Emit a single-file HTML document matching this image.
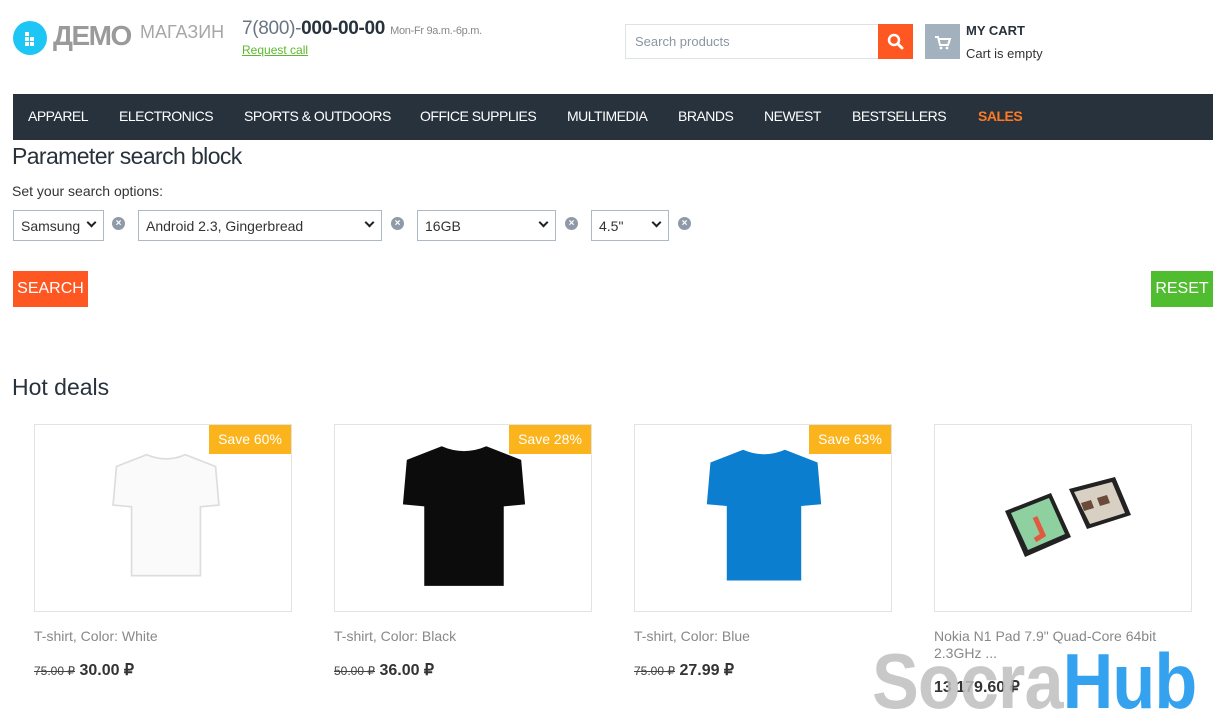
<!DOCTYPE html>
<html><head><meta charset="utf-8"><style>
*{margin:0;padding:0;box-sizing:border-box}
body{width:1220px;height:724px;background:#fff;font-family:"Liberation Sans",sans-serif;position:relative;overflow:hidden;color:#333}
.a{position:absolute}
.nav{left:13px;top:94px;width:1200px;height:46px;background:#27323d}
.nav span{position:absolute;top:14px;color:#fff;font-size:14px;letter-spacing:-0.5px}
.sel{position:absolute;top:210px;height:31px;border:1px solid #aeb9c4;font-size:14px;padding:7px 7px;color:#333}
.sel i{position:absolute;right:8px;top:8px;width:7px;height:7px;border-right:2px solid #222;border-bottom:2px solid #222;transform:rotate(45deg)}
.x{position:absolute;top:217px;width:13px;height:13px;border-radius:50%;background:#8e9aa7;color:#fff;font-size:10px;line-height:13px;text-align:center;font-weight:bold}
.card{position:absolute;top:424px;width:258px;height:188px;border:1px solid #e3e3e3}
.badge{position:absolute;right:0;top:0;width:82px;height:29px;background:#fbb41c;color:#fff;font-size:14px;line-height:29px;text-align:center}
.name{position:absolute;top:628px;font-size:14px;color:#888;line-height:17px}
.pr{position:absolute;top:660px;font-size:16px;font-weight:bold;color:#333}
.pr s{font-size:12px;font-weight:normal;color:#444}
</style></head><body>
<div class="a" style="left:13px;top:21px;width:34px;height:34px;border-radius:50%;background:#1ec6f5">
<div class="a" style="left:12px;top:11px;width:4px;height:4px;background:#fff"></div>
<div class="a" style="left:17px;top:16px;width:4px;height:4px;background:#fff"></div>
<div class="a" style="left:12px;top:16px;width:4px;height:4px;background:#fff"></div>
<div class="a" style="left:12px;top:21px;width:4px;height:4px;background:#fff"></div>
<div class="a" style="left:17px;top:21px;width:4px;height:4px;background:#fff"></div>
</div>
<div class="a" style="left:53px;top:20px;font-size:28px;font-weight:bold;color:#9a9a9a;letter-spacing:-1.5px">ДЕМО</div>
<div class="a" style="left:140px;top:22px;font-size:18px;color:#a7a7a7">МАГАЗИН</div>
<div class="a" style="left:242px;top:18px;font-size:19px;color:#6a7583;letter-spacing:-0.3px">7(800)-<b style="color:#27323d">000-00-00</b> <span style="font-size:11px;color:#888">Mon-Fr 9a.m.-6p.m.</span></div>
<div class="a" style="left:242px;top:43px;font-size:12px;color:#5cb82e;text-decoration:underline">Request call</div>
<div class="a" style="left:625px;top:24px;width:254px;height:35px;border:1px solid #dde2e6;font-size:13px;color:#8a96a3;padding:9px 9px">Search products</div>
<div class="a" style="left:878px;top:24px;width:35px;height:35px;background:#fe5722">
<svg width="35" height="35"><circle cx="16" cy="16" r="5" stroke="#fff" stroke-width="2.5" fill="none"/><path d="M20 20l4 4" stroke="#fff" stroke-width="3" stroke-linecap="round"/></svg></div>
<div class="a" style="left:925px;top:24px;width:35px;height:35px;background:#a3b1be">
<svg width="35" height="35"><path d="M10 13h3l2 8h8l2-6H14" stroke="#fff" stroke-width="2" fill="none"/><circle cx="16" cy="24" r="1.4" fill="#fff"/><circle cx="22" cy="24" r="1.4" fill="#fff"/></svg></div>
<div class="a" style="left:966px;top:23px;font-size:13px;font-weight:bold;color:#27323d">MY CART</div>
<div class="a" style="left:966px;top:46px;font-size:13px;color:#333">Cart is empty</div>
<div class="a nav">
<span style="left:15px">APPAREL</span><span style="left:106px">ELECTRONICS</span><span style="left:231px">SPORTS &amp; OUTDOORS</span><span style="left:407px">OFFICE SUPPLIES</span><span style="left:554px">MULTIMEDIA</span><span style="left:665px">BRANDS</span><span style="left:751px">NEWEST</span><span style="left:839px">BESTSELLERS</span><span style="left:965px;color:#fe7a22;font-weight:bold">SALES</span></div>
<div class="a" style="left:12px;top:143px;font-size:23px;color:#27323d;letter-spacing:-0.6px">Parameter search block</div>
<div class="a" style="left:12px;top:183px;font-size:14px;color:#333">Set your search options:</div>
<div class="sel" style="left:13px;width:91px">Samsung<i></i></div><div class="x" style="left:112px">×</div>
<div class="sel" style="left:138px;width:244px">Android 2.3, Gingerbread<i></i></div><div class="x" style="left:391px">×</div>
<div class="sel" style="left:417px;width:139px">16GB<i></i></div><div class="x" style="left:565px">×</div>
<div class="sel" style="left:591px;width:78px">4.5"<i></i></div><div class="x" style="left:678px">×</div>
<div class="a" style="left:13px;top:271px;width:75px;height:36px;background:#fe5722;color:#fff;font-size:16px;line-height:36px;text-align:center">SEARCH</div>
<div class="a" style="left:1151px;top:271px;width:62px;height:36px;background:#4fbd2f;color:#fff;font-size:16px;line-height:36px;text-align:center">RESET</div>
<div class="a" style="left:12px;top:374px;font-size:23px;color:#27323d">Hot deals</div>

<div class="card" style="left:34px"><svg class="a" style="left:66px;top:28px" width="130" height="126" viewBox="0 0 130 150"><path d="M42 2Q65 12 88 2L124 16L128 62L106 64L106 146L24 146L24 64L2 62L6 16Z" fill="#fafafa" stroke="#ddd" stroke-width="2"/></svg><div class="badge">Save 60%</div></div>
<div class="card" style="left:334px"><svg class="a" style="left:66px;top:19px" width="126" height="146" viewBox="0 0 130 150"><path d="M42 2Q65 12 88 2L124 16L128 62L106 64L106 146L24 146L24 64L2 62L6 16Z" fill="#0c0c0c"/></svg><div class="badge">Save 28%</div></div>
<div class="card" style="left:634px"><svg class="a" style="left:70px;top:20px" width="118" height="142" viewBox="0 0 130 150"><path d="M42 2Q65 12 88 2L124 16L128 62L106 64L106 146L24 146L24 64L2 62L6 16Z" fill="#0c7ed0"/></svg><div class="badge">Save 63%</div></div>
<div class="card" style="left:934px"><svg class="a" style="left:66px;top:48px" width="130" height="90" viewBox="0 0 130 90"><path d="M4 38L50 20L70 64L24 84Z" fill="#222"/><path d="M10 40L48 25L64 61L27 77Z" fill="#8fd0a0"/><path d="M34 44l8 18l-8 5" stroke="#e05a40" stroke-width="5" fill="none"/><path d="M68 16L114 4L130 42L86 56Z" fill="#222"/><path d="M73 19L111 9L124 40L89 51Z" fill="#d9d0c4"/><path d="M80 30l10 -3l3 8l-10 3Z M96 25l10-3l3 8l-10 3Z" fill="#6b4a3a"/></svg></div>

<div class="name" style="left:34px">T-shirt, Color: White</div>
<div class="name" style="left:334px">T-shirt, Color: Black</div>
<div class="name" style="left:634px">T-shirt, Color: Blue</div>
<div class="name" style="left:934px;width:260px">Nokia N1 Pad 7.9" Quad-Core 64bit 2.3GHz ...</div>
<div class="pr" style="left:34px"><s>75.00 ₽</s> 30.00 ₽</div>
<div class="pr" style="left:334px"><s>50.00 ₽</s> 36.00 ₽</div>
<div class="pr" style="left:634px"><s>75.00 ₽</s> 27.99 ₽</div>
<div class="pr" style="left:934px;top:677px">13 179.60 ₽</div>
<div class="a" style="left:872px;top:636px;font-size:78px;font-weight:bold;letter-spacing:-1px;line-height:90px;white-space:nowrap;transform:scaleX(0.9);transform-origin:0 0"><span style="color:rgba(190,190,190,0.85)">Socra</span><span style="color:#35a2f0">Hub</span></div>
</body></html>
